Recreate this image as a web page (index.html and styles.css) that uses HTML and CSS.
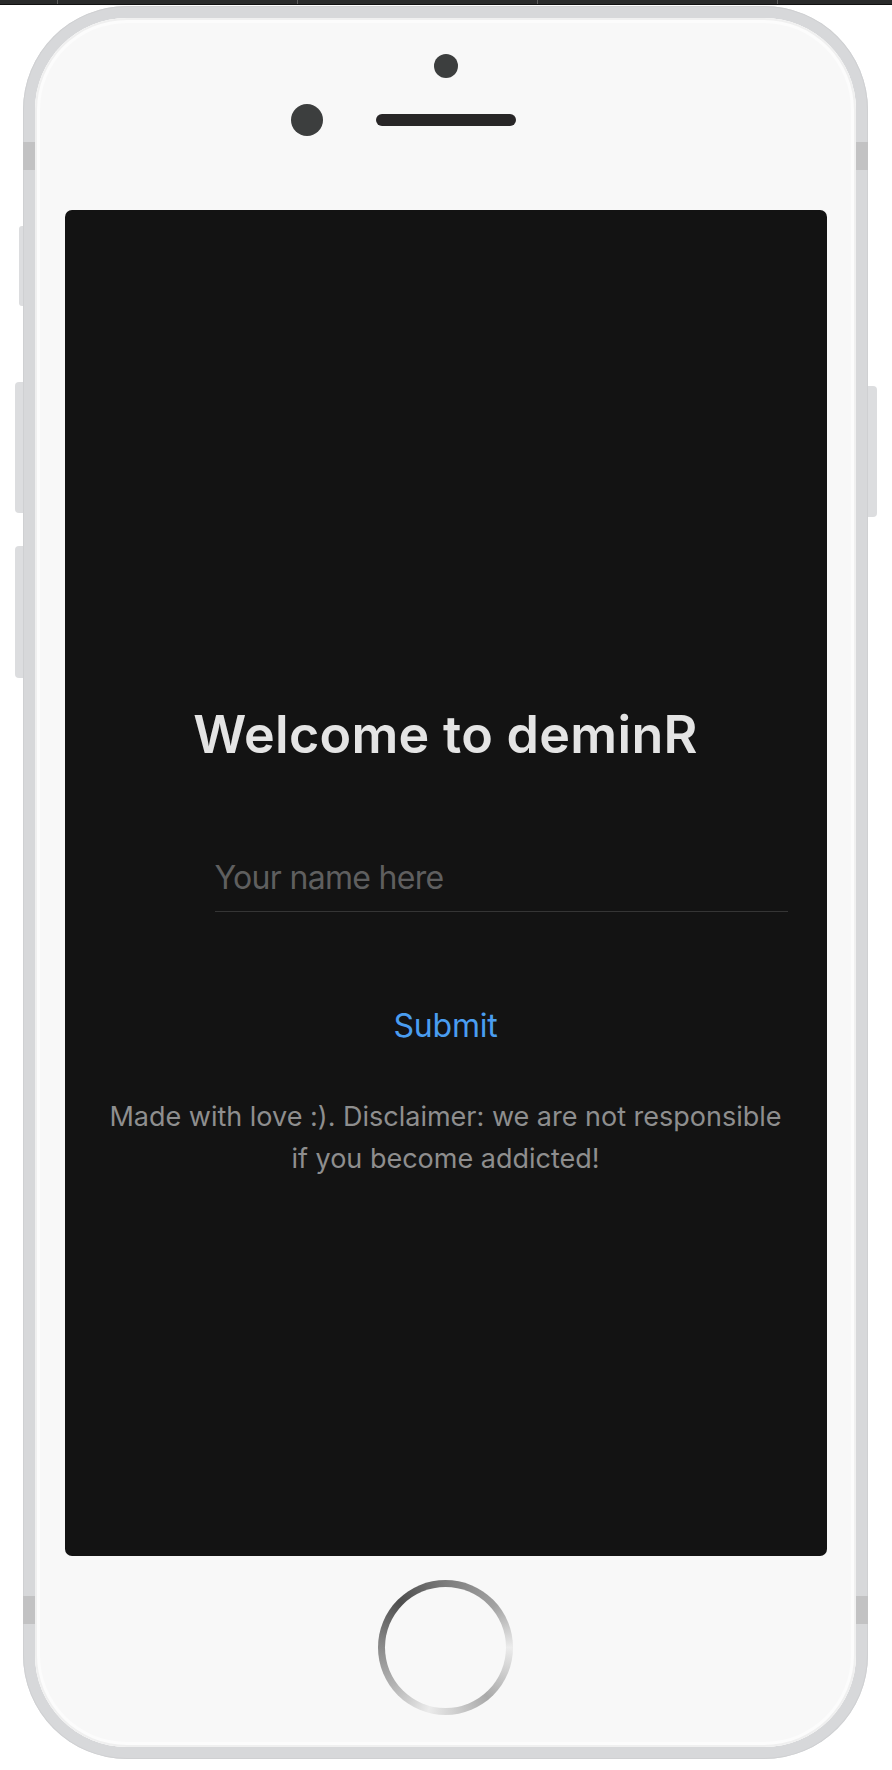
FILE: index.html
```html
<!DOCTYPE html>
<html lang="en">
<head>
<meta charset="utf-8">
<title>deminR</title>
<link rel="stylesheet" href="styles.css">
</head>
<body>
<div class="topbar">
  <span class="tick"></span><span class="tick"></span><span class="tick"></span><span class="tick"></span>
</div>
<div class="stage">
  <div class="phone">
    <span class="side-btn mute"></span>
    <span class="side-btn vol-up"></span>
    <span class="side-btn vol-down"></span>
    <span class="side-btn power"></span>
    <span class="band band-tl"></span>
    <span class="band band-tr"></span>
    <span class="band band-bl"></span>
    <span class="band band-br"></span>
    <div class="face">
      <div class="face-top">
        <span class="sensor"></span>
        <div class="cam-row">
          <span class="camera"></span>
          <span class="speaker"></span>
          <span></span>
        </div>
      </div>
      <div class="screen">
        <h1 class="title">Welcome to deminR</h1>
        <input class="name-input" type="text" placeholder="Your name here">
        <button class="submit" type="button">Submit</button>
        <p class="note">Made with love :). Disclaimer: we are not responsible if you become addicted!</p>
      </div>
      <div class="face-bottom">
        <span class="home"></span>
      </div>
    </div>
  </div>
</div>
</body>
</html>
```
FILE: styles.css
```css
html, body {
  margin: 0;
  padding: 0;
  background: #ffffff;
}

body {
  font-family: Inter, "Noto Sans", "Liberation Sans", sans-serif;
  width: 892px;
  height: 1770px;
  overflow: hidden;
}

.topbar {
  height: 4px;
  background: #2a2b2b;
  border-bottom: 1px solid #111111;
  display: flex;
  gap: 239px;
  padding-left: 57px;
}

.tick {
  width: 1px;
  height: 4px;
  background: #5a5a5a;
}

.stage {
  padding: 1px 0 0 23px;
}

.phone {
  position: relative;
  width: 845px;
  height: 1753px;
  box-sizing: border-box;
  padding: 12px;
  border-radius: 104px;
  background: #d7d8da;
  box-shadow: inset 0 0 0 1px #cfd0d2;
}

.side-btn {
  position: absolute;
  background: #dcdddf;
}

.mute {
  left: -4px;
  top: 220px;
  width: 4px;
  height: 80px;
  border-radius: 3px 0 0 3px;
}

.vol-up {
  left: -8px;
  top: 376px;
  width: 8px;
  height: 131px;
  border-radius: 4px 0 0 4px;
}

.vol-down {
  left: -8px;
  top: 540px;
  width: 8px;
  height: 132px;
  border-radius: 4px 0 0 4px;
}

.power {
  right: -9px;
  top: 380px;
  width: 9px;
  height: 131px;
  border-radius: 0 4px 4px 0;
}

.band {
  position: absolute;
  width: 12px;
  height: 28px;
  background: #c2c2c3;
}

.band-tl { left: 0; top: 136px; }
.band-tr { right: 0; top: 136px; }
.band-bl { left: 0; top: 1590px; }
.band-br { right: 0; top: 1590px; }

.face {
  position: relative;
  height: 100%;
  border-radius: 92px;
  background: #f8f8f8;
  box-shadow: inset 0 0 0 2px #f0f0f0, inset 0 0 0 5px #fcfcfc;
  display: flex;
  flex-direction: column;
  align-items: center;
}

.face-top {
  height: 192px;
  width: 100%;
  display: flex;
  flex-direction: column;
  align-items: center;
}

.sensor {
  margin-top: 36px;
  width: 24px;
  height: 24px;
  border-radius: 50%;
  background: #3c3e3e;
}

.cam-row {
  margin-top: 26px;
  width: 100%;
  display: grid;
  grid-template-columns: 1fr 140px 1fr;
  align-items: center;
}

.camera {
  justify-self: end;
  margin-right: 53px;
  width: 32px;
  height: 32px;
  border-radius: 50%;
  background: #3c3e3e;
}

.speaker {
  height: 12px;
  border-radius: 6px;
  background: #282627;
}

.screen {
  width: 762px;
  height: 1346px;
  flex: none;
  box-sizing: border-box;
  border-radius: 7px;
  background: #131313;
  display: flex;
  flex-direction: column;
  align-items: center;
  padding-top: 494px;
}

.title {
  margin: 0;
  font-size: 52px;
  line-height: 62px;
  font-weight: 600;
  color: #e4e4e4;
  letter-spacing: 0.3px;
}

.name-input {
  align-self: flex-start;
  margin: 92px 0 0 150px;
  width: 573px;
  height: 40px;
  box-sizing: content-box;
  padding: 0 0 13px 0;
  border: none;
  border-bottom: 1px solid #353535;
  background: transparent;
  font-family: inherit;
  font-size: 32px;
  line-height: 40px;
  letter-spacing: -0.7px;
  color: #e4e4e4;
  outline: none;
}

.name-input::placeholder {
  color: #5f5f5f;
}

.submit {
  margin-top: 94px;
  padding: 0;
  border: none;
  background: transparent;
  font-family: inherit;
  font-size: 32px;
  line-height: 40px;
  letter-spacing: -0.2px;
  color: #4a9df0;
}

.note {
  margin: 50px 0 0;
  padding: 0 38px;
  box-sizing: border-box;
  width: 100%;
  text-align: center;
  font-size: 27px;
  line-height: 41.5px;
  letter-spacing: 0;
  color: #8e8e8e;
}

.face-bottom {
  flex: 1;
  width: 100%;
  display: flex;
  align-items: center;
  justify-content: center;
  padding-bottom: 9px;
  box-sizing: border-box;
}

.home {
  position: relative;
  width: 135px;
  height: 135px;
  border-radius: 50%;
  background: conic-gradient(#7c7c7c 0deg, #a2a2a2 50deg, #ececec 90deg, #a9a9a9 140deg, #ebebeb 195deg, #b2b2b2 235deg, #858585 275deg, #4e4e4e 315deg, #7c7c7c 360deg);
}

.home::after {
  content: "";
  position: absolute;
  inset: 7px;
  border-radius: 50%;
  background: #f8f8f8;
}
```
